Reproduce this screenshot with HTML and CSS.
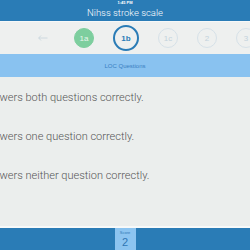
FILE: index.html
```html
<html>
<head>
  <title>Nihss stroke scale</title>
  <link rel="stylesheet" href="styles.css">
</head>
<body>
  <!-- Top bar with status line and title -->
  <div class="top-bar">
    <div class="status">1:45 PM</div>
    <div class="title">Nihss stroke scale</div>
  </div>

  <!-- Step navigation -->
  <div class="steps">
    <svg class="back" width="10" height="6" viewBox="0 0 10 6">
      <path d="M3 0.5 L0.7 3 L3 5.5 M0.7 3 H9.5" fill="none" stroke="#c5d3dc" stroke-width="0.8"/>
    </svg>
    <span class="step done">1a</span>
    <span class="step current">1b</span>
    <span class="step">1c</span>
    <span class="step">2</span>
    <span class="step">3</span>
  </div>

  <!-- Section header -->
  <div class="section">LOC Questions</div>

  <!-- Answer options -->
  <ul class="answers">
    <li>Answers both questions correctly.</li>
    <li>Answers one question correctly.</li>
    <li>Answers neither question correctly.</li>
  </ul>

  <!-- Score footer -->
  <div class="footer">
    <div class="score">
      <span class="score-label">Score</span>
      <span class="score-value">2</span>
    </div>
  </div>
</body>
</html>
```

FILE: styles.css
```css
/* Page */
body {
  margin: 0;
  width: 250px;
  height: 250px;
  overflow: hidden;
  font-family: 'Liberation Sans', Arial, sans-serif;
  background: #ebeeed;
  display: flex;
  flex-direction: column;
}

/* Top bar */
.top-bar {
  background: #2a7cb6;
  color: white;
  height: 21px;
  text-align: center;
  flex-shrink: 0;
}

.status {
  font-size: 4px;
  line-height: 6px;
  font-weight: bold;
}

.title {
  font-family: Roboto, 'Liberation Sans', sans-serif;
  font-weight: 300;
  font-size: 9.5px;
  line-height: 13px;
}

/* Step navigation row */
.steps {
  height: 32px;
  background: #eef0ef;
  border-top: 1px solid #f6f8f8;
  display: flex;
  align-items: center;
  padding-left: 38px;
  gap: 19px;
  overflow: hidden;
  flex-shrink: 0;
}

.steps > * {
  flex-shrink: 0;
}

.back {
  margin-right: 7px;
}

.step {
  width: 18px;
  height: 18px;
  border-radius: 50%;
  border: 1px solid #d6e1e8;
  color: #c3d2dc;
  font-size: 8px;
  display: flex;
  align-items: center;
  justify-content: center;
}

.step.done {
  background: #7dce9e;
  border-color: #7dce9e;
  color: #e6f6ec;
}

.step.current {
  width: 22px;
  height: 22px;
  border: 2px solid #2a7cb6;
  color: #2a7cb6;
  font-weight: bold;
}

/* Section header bar */
.section {
  height: 23px;
  background: #89c2f0;
  color: #3a7fc2;
  font-size: 6px;
  display: flex;
  align-items: center;
  justify-content: center;
  flex-shrink: 0;
}

/* Answer list */
.answers {
  list-style: none;
  margin: 0 0 0 -19px;
  padding: 13px 0 0;
  flex: 1;
}

.answers li {
  font-family: Roboto, 'Liberation Sans', sans-serif;
  font-weight: 300;
  font-size: 11px;
  color: #555;
  line-height: 16px;
  margin-bottom: 23px;
  white-space: nowrap;
}

/* Footer with score */
.footer {
  height: 22px;
  border-top: 2px solid #f7f9f9;
  background: #2a7cb6;
  display: flex;
  justify-content: center;
  flex-shrink: 0;
}

.score {
  width: 21px;
  background: #8cc4f0;
  display: flex;
  flex-direction: column;
  align-items: center;
  color: #2f76b4;
}

.score-label {
  font-size: 4px;
  line-height: 7px;
  margin-top: 1px;
}

.score-value {
  font-size: 11px;
  line-height: 12px;
}
```
